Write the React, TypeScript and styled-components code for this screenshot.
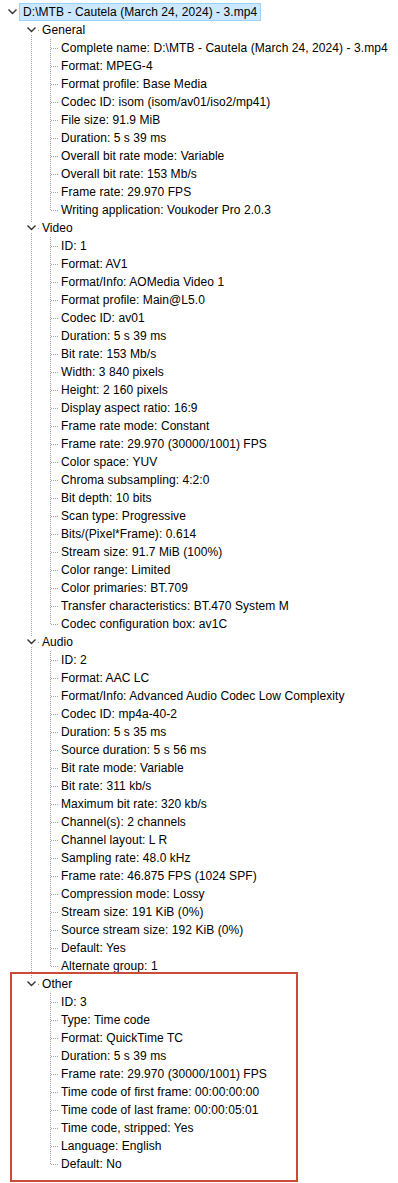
import styled, { createGlobalStyle, css } from 'styled-components';

type Group = { title: string; items: string[] };

const ROOT = 'D:\\MTB - Cautela (March 24, 2024) - 3.mp4';

const GROUPS: Group[] = [
  {
    title: 'General',
    items: [
      `Complete name: ${ROOT}`,
      'Format: MPEG-4',
      'Format profile: Base Media',
      'Codec ID: isom (isom/av01/iso2/mp41)',
      'File size: 91.9 MiB',
      'Duration: 5 s 39 ms',
      'Overall bit rate mode: Variable',
      'Overall bit rate: 153 Mb/s',
      'Frame rate: 29.970 FPS',
      'Writing application: Voukoder Pro 2.0.3',
    ],
  },
  {
    title: 'Video',
    items: [
      'ID: 1',
      'Format: AV1',
      'Format/Info: AOMedia Video 1',
      'Format profile: Main@L5.0',
      'Codec ID: av01',
      'Duration: 5 s 39 ms',
      'Bit rate: 153 Mb/s',
      'Width: 3 840 pixels',
      'Height: 2 160 pixels',
      'Display aspect ratio: 16:9',
      'Frame rate mode: Constant',
      'Frame rate: 29.970 (30000/1001) FPS',
      'Color space: YUV',
      'Chroma subsampling: 4:2:0',
      'Bit depth: 10 bits',
      'Scan type: Progressive',
      'Bits/(Pixel*Frame): 0.614',
      'Stream size: 91.7 MiB (100%)',
      'Color range: Limited',
      'Color primaries: BT.709',
      'Transfer characteristics: BT.470 System M',
      'Codec configuration box: av1C',
    ],
  },
  {
    title: 'Audio',
    items: [
      'ID: 2',
      'Format: AAC LC',
      'Format/Info: Advanced Audio Codec Low Complexity',
      'Codec ID: mp4a-40-2',
      'Duration: 5 s 35 ms',
      'Source duration: 5 s 56 ms',
      'Bit rate mode: Variable',
      'Bit rate: 311 kb/s',
      'Maximum bit rate: 320 kb/s',
      'Channel(s): 2 channels',
      'Channel layout: L R',
      'Sampling rate: 48.0 kHz',
      'Frame rate: 46.875 FPS (1024 SPF)',
      'Compression mode: Lossy',
      'Stream size: 191 KiB (0%)',
      'Source stream size: 192 KiB (0%)',
      'Default: Yes',
      'Alternate group: 1',
    ],
  },
  {
    title: 'Other',
    items: [
      'ID: 3',
      'Type: Time code',
      'Format: QuickTime TC',
      'Duration: 5 s 39 ms',
      'Frame rate: 29.970 (30000/1001) FPS',
      'Time code of first frame: 00:00:00:00',
      'Time code of last frame: 00:00:05:01',
      'Time code, stripped: Yes',
      'Language: English',
      'Default: No',
    ],
  },
];

function Chevron() {
  return (
    <ChevronIcon width='11' height='9' viewBox='0 0 11 9'>
      <polyline points='1.5,2.5 5.5,6.5 9.5,2.5' fill='none' stroke='#333333' strokeWidth='1.4' />
    </ChevronIcon>
  );
}

export default function App() {
  return (
    <>
      <GlobalStyle />
      <Tree>
        <Row>
          <Cell>
            <Chevron />
          </Cell>
          <Label $selected>{ROOT}</Label>
        </Row>
        {GROUPS.map((group, gi) => {
          const lastGroup = gi === GROUPS.length - 1;
          return (
            <GroupBlock key={group.title} $highlight={group.title === 'Other'}>
              <Row>
                <Cell />
                <Cell $line={gi === 0 ? 'bottom' : lastGroup ? 'top' : 'full'} $gap $stub='short'>
                  <Chevron />
                </Cell>
                <Label>{group.title}</Label>
              </Row>
              {group.items.map((item, ii) => (
                <Row key={item}>
                  <Cell />
                  <Cell $line={lastGroup ? undefined : 'full'} />
                  <Cell $line={ii === group.items.length - 1 ? 'top' : 'full'} $stub='long' />
                  <Label>{item}</Label>
                </Row>
              ))}
            </GroupBlock>
          );
        })}
      </Tree>
    </>
  );
}

const GlobalStyle = createGlobalStyle`
  html, body {
    margin: 0;
    background: #ffffff;
  }
  body {
    font-family: 'Liberation Sans', Arial, sans-serif;
    font-size: 12px;
    letter-spacing: 0.07px;
    color: #000000;
  }
`;

const Tree = styled.div`
  display: flex;
  flex-direction: column;
  padding: 3px 0 11px;
`;

const GroupBlock = styled.div<{ $highlight?: boolean }>`
  position: relative;
  display: flex;
  flex-direction: column;

  ${(p) =>
    p.$highlight &&
    css`
      &::after {
        content: '';
        position: absolute;
        left: 10px;
        top: -3px;
        bottom: -9px;
        width: 284px;
        border: 2px solid #cc4b36;
        pointer-events: none;
      }
    `}
`;

const Row = styled.div`
  display: flex;
  align-items: center;
  height: 18px;
  padding-left: 2px;
  white-space: nowrap;
`;

const dotsDown = 'repeating-linear-gradient(to bottom, #a0a0a0 0 1px, transparent 1px 2px)';
const dotsRight = 'repeating-linear-gradient(to right, #a0a0a0 0 1px, transparent 1px 2px)';

const Cell = styled.div<{ $line?: 'full' | 'top' | 'bottom'; $stub?: 'short' | 'long'; $gap?: boolean }>`
  position: relative;
  flex: 0 0 19px;
  height: 18px;

  ${(p) =>
    p.$line &&
    css`
      &::before {
        content: '';
        position: absolute;
        left: 10px;
        width: 1px;
        top: ${p.$line === 'bottom' ? (p.$gap ? '14px' : '9px') : '0'};
        bottom: ${p.$line === 'top' ? '9px' : '0'};
        background-image: ${dotsDown};
      }
    `}

  ${(p) =>
    p.$stub &&
    css`
      &::after {
        content: '';
        position: absolute;
        top: 9px;
        height: 1px;
        left: ${p.$stub === 'short' ? '17px' : '11px'};
        right: 0;
        background-image: ${dotsRight};
      }
    `}
`;

const ChevronIcon = styled.svg`
  position: absolute;
  left: 5px;
  top: 4px;
  background: #ffffff;
  z-index: 1;
`;

const Label = styled.span<{ $selected?: boolean }>`
  margin-left: -2px;
  padding: 0 3px;
  height: 16px;
  line-height: 16px;
  border: 1px solid ${(p) => (p.$selected ? '#99d1ff' : 'transparent')};
  background: ${(p) => (p.$selected ? '#cce8ff' : 'transparent')};
`;
